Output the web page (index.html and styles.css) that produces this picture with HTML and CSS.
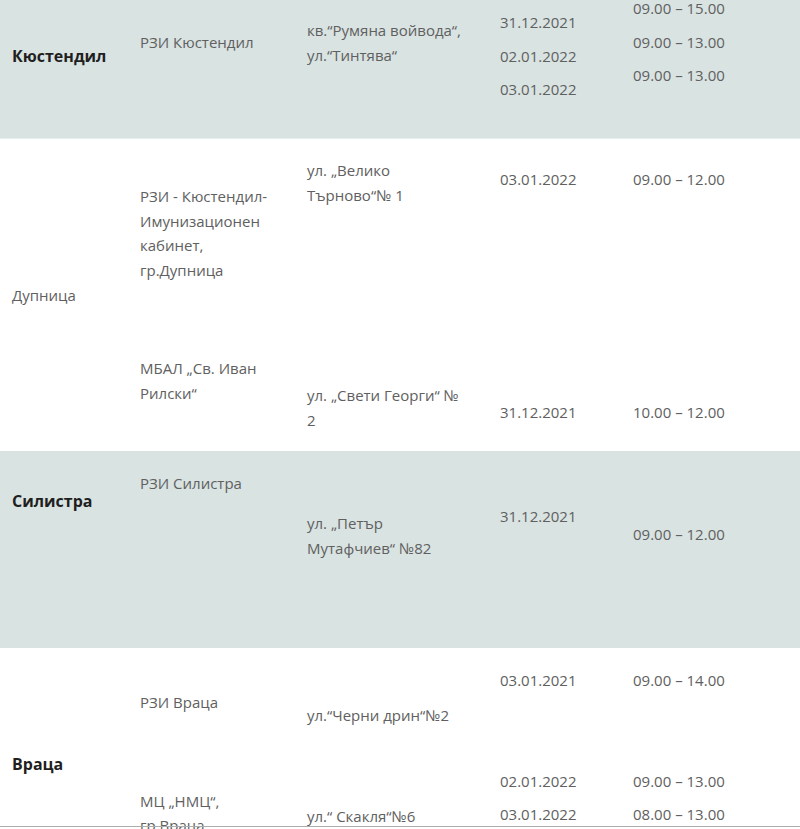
FILE: index.html
```html
<!DOCTYPE html>
<html lang="bg">
<head>
<meta charset="utf-8">
<title>Ваксинационни пунктове</title>
<link rel="stylesheet" href="styles.css">
</head>
<body>
<div class="table">
  <div class="row row-1 shaded">
    <div class="cell pt-64"><p class="city">Кюстендил</p></div>
    <div class="cell pt-50"><p>РЗИ Кюстендил</p></div>
    <div class="cell pt-38"><p>кв.“Румяна войвода“,<br>ул.“Тинтява“</p></div>
    <div class="cell pt-30 tight"><p>31.12.2021</p><p>02.01.2022</p><p>03.01.2022</p></div>
    <div class="cell pt-15 tight"><p>09.00 – 15.00</p><p>09.00 – 13.00</p><p>09.00 – 13.00</p></div>
  </div>
  <div class="row row-2">
    <div class="cell pt-144"><p>Дупница</p></div>
    <div class="cell pt-45"><p>РЗИ - Кюстендил-<br>Имунизационен<br>кабинет,<br>гр.Дупница</p><p class="mt-74">МБАЛ „Св. Иван<br>Рилски“</p></div>
    <div class="cell pt-19"><p>ул. „Велико<br>Търново“№ 1</p><p class="mt-176">ул. „Свети Георги“ №<br>2</p></div>
    <div class="cell pt-28"><p>03.01.2022</p><p class="mt-208">31.12.2021</p></div>
    <div class="cell pt-28"><p>09.00 – 12.00</p><p class="mt-208">10.00 – 12.00</p></div>
  </div>
  <div class="row row-3 shaded">
    <div class="cell pt-38"><p class="city">Силистра</p></div>
    <div class="cell pt-20"><p>РЗИ Силистра</p></div>
    <div class="cell pt-60"><p>ул. „Петър<br>Мутафчиев“ №82</p></div>
    <div class="cell pt-53"><p>31.12.2021</p></div>
    <div class="cell pt-71"><p>09.00 – 12.00</p></div>
  </div>
  <div class="row row-4">
    <div class="cell pt-104"><p class="city">Враца</p></div>
    <div class="cell pt-42"><p>РЗИ Враца</p><p class="mt-74">МЦ „НМЦ“,<br>гр.Враца</p></div>
    <div class="cell pt-55"><p>ул.“Черни дрин“№2</p><p class="mt-76">ул.“ Скакля“№6</p></div>
    <div class="cell pt-20 tight"><p>03.01.2021</p><p class="mt-76">02.01.2022</p><p>03.01.2022</p></div>
    <div class="cell pt-20 tight"><p>09.00 – 14.00</p><p class="mt-76">09.00 – 13.00</p><p>08.00 – 13.00</p></div>
  </div>
</div>
<div class="frame-edge"></div>
</body>
</html>
```

FILE: styles.css
```css
html, body {
  margin: 0;
  padding: 0;
  background: #ffffff;
  overflow: hidden;
}

body {
  font-family: "Open Sans", "Noto Sans", sans-serif;
  font-size: 15px;
  line-height: 24.5px;
  color: #606060;
  height: 829px;
}

.table {
  margin-top: -20px;
  width: 800px;
}

.row {
  display: grid;
  grid-template-columns: 128px 167px 193px 133px 1fr;
  padding-left: 12px;
  box-sizing: border-box;
}

.shaded {
  background: #d9e3e2;
}

.row-1 { height: 159px; border-bottom: 1px solid #e6eded; }
.row-2 { height: 312px; }
.row-3 { height: 197px; }
.row-4 { height: 260px; }

.cell {
  display: flex;
  flex-direction: column;
}

.cell p {
  margin: 0;
}

.cell.tight p + p {
  margin-top: 9px;
}

.city {
  font-size: 16px;
  font-weight: 700;
  color: #1f1f1f;
}

.pt-15 { padding-top: 16px; }
.pt-19 { padding-top: 19px; }
.pt-20 { padding-top: 20px; }
.pt-28 { padding-top: 28px; }
.pt-30 { padding-top: 30px; }
.pt-38 { padding-top: 38px; }
.pt-42 { padding-top: 42px; }
.pt-45 { padding-top: 45px; }
.pt-50 { padding-top: 50px; }
.pt-53 { padding-top: 53px; }
.pt-55 { padding-top: 55px; }
.pt-60 { padding-top: 60px; }
.pt-64 { padding-top: 64px; }
.pt-71 { padding-top: 71px; }
.pt-104 { padding-top: 104px; }
.pt-144 { padding-top: 144px; }

.cell p.mt-74 { margin-top: 74px; }
.cell p.mt-76,
.cell.tight p.mt-76 { margin-top: 76px; }
.cell p.mt-176 { margin-top: 176px; }
.cell p.mt-208 { margin-top: 208px; }

.frame-edge {
  position: fixed;
  left: 0;
  right: 0;
  top: 826px;
  height: 1px;
  background: #a9adad;
}
```
